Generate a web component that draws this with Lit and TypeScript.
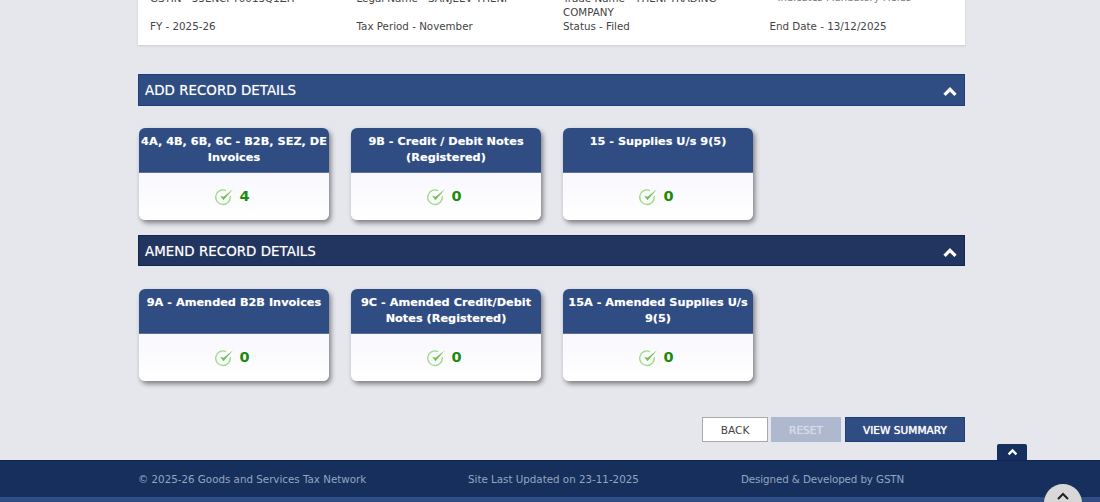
import { LitElement, html, css, svg } from "lit";
import { customElement } from "lit/decorators.js";

const check = svg`<svg class="chk" width="19" height="19" viewBox="0 0 18 18" fill="none">
  <path d="M14.4 8.6 A6.9 6.9 0 1 1 10.4 3.4" stroke="#9ddc84" stroke-width="1.3"/>
  <path d="M4.8 8.4 L8 12.6 L17 2.2 L8.1 9.2 Z" fill="#6fc24f"/>
</svg>`;

const chevron = svg`<svg class="chev" width="16" height="11" viewBox="0 0 14 10" fill="none"><path d="M2 8 L7 3 L12 8" stroke="#fff" stroke-width="3"/></svg>`;
const chevronSmall = svg`<svg width="11" height="8" viewBox="0 0 14 10" fill="none"><path d="M2 8 L7 3 L12 8" stroke="#fff" stroke-width="3"/></svg>`;

const add = [
  ["4A, 4B, 6B, 6C - B2B, SEZ, DE Invoices", "4"],
  ["9B - Credit / Debit Notes (Registered)", "0"],
  ["15 - Supplies U/s 9(5)", "0"],
];
const amend = [
  ["9A - Amended B2B Invoices", "0"],
  ["9C - Amended Credit/Debit Notes (Registered)", "0"],
  ["15A - Amended Supplies U/s 9(5)", "0"],
];

@customElement("app-root")
export class AppRoot extends LitElement {
  static styles = css`
    :host { display: block; position: relative; width: 1100px; height: 502px; overflow: hidden; background: #e6e7ed; font-family: "DejaVu Sans", Verdana, sans-serif; }
    .wrap { width: 827px; margin-left: 138px; }
    .info { margin-top: -9px; height: 54px; box-sizing: border-box; background: #fff; box-shadow: 0 1px 2px rgba(0,0,0,.12); display: grid; grid-template-columns: repeat(4, 206.5px); padding-left: 12px; font-size: 10.3px; line-height: 14px; color: #444; align-content: start; }
    .mand { color: #777; font-size: 10px; padding-left: 8px; }
    .bar { display: flex; justify-content: space-between; align-items: center; box-sizing: border-box; background: #2f4d83; border: 1px solid #1f3f7c; color: #fff; font-size: 13.45px; padding: 0 6px 0 6px; text-shadow: 0 0 1px rgba(255,255,255,.5); }
    .chev { display: block; margin-top: 2px; }
    .bar.add { margin-top: 29px; height: 32px; }
    .bar.amend { margin-top: 15px; height: 31px; padding-top: 1px; background: #223560; border-color: #14264f; }
    .cards { display: flex; gap: 22px; margin: 22px 0 0 1px; }
    .bar.amend + .cards { margin-top: 23px; }
    .card { width: 190px; height: 92px; border-radius: 6px; overflow: hidden; box-shadow: 2px 3px 5px rgba(0,0,0,.45); display: flex; flex-direction: column; background: linear-gradient(#f1f1fc, #fff); }
    .card-h { height: 45px; flex: none; box-sizing: border-box; background: #2f4d83; border-bottom: 1px solid #5a7099; color: #fff; font-size: 11.3px; font-weight: 700; line-height: 16px; text-align: center; padding: 6px 0 0; text-shadow: 0 0 1px rgba(255,255,255,.4); }
    .card-b { flex: 1; display: flex; align-items: center; justify-content: center; gap: 5px; color: #1d8a0e; font-size: 14.5px; font-weight: 700; padding: 0 3px 2px 0; }
    .chk { display: block; margin-top: 1px; }
    .actions { display: flex; justify-content: flex-end; gap: 3px; margin-top: 36px; }
    .btn { height: 25px; box-sizing: border-box; display: flex; align-items: center; justify-content: center; font-size: 10.6px; }
    .back { width: 66px; background: #fff; border: 1px solid #aaa; color: #444; }
    .reset { width: 70px; background: #aeb9cf; color: #d5dae6; margin-right: 1px; text-shadow: 0 0 1px rgba(255,255,255,.6); }
    .view { width: 120px; background: #2f4d83; border: 1px solid #1f3f7c; color: #fff; text-shadow: 0 0 1px #fff; }
    footer { position: absolute; left: 0; right: 0; top: 460px; height: 42px; box-sizing: border-box; background: #172f5d; border-top: 1px solid #0f2558; border-bottom: 5px solid #2f4d83; font-size: 10.3px; color: #93a6c0; display: grid; grid-template-columns: 330px 273px 1fr; padding-left: 138px; align-items: center; }
    .credit { letter-spacing: -0.1px; }
    .up { position: absolute; left: 997px; top: 444px; width: 30px; height: 16px; background: #172f5d; border-radius: 2px 2px 0 0; display: flex; align-items: center; justify-content: center; }
    .circle { position: absolute; left: 1044px; top: 484px; width: 38px; height: 38px; border-radius: 50%; background: #d8d8d8; display: flex; justify-content: center; padding-top: 7px; box-sizing: border-box; }
  `;

  cards(list: string[][]) {
    return html`<div class="cards">${list.map(
      ([t, n]) => html`<div class="card"><div class="card-h">${t}</div><div class="card-b">${check}<span>${n}</span></div></div>`
    )}</div>`;
  }

  render() {
    return html`
      <div class="wrap">
        <div class="info">
          <div>GSTIN - 33ENCPT0013Q1ZH</div>
          <div>Legal Name - SANJEEV THENI</div>
          <div>Trade Name - THENI TRADING COMPANY</div>
          <div class="mand">Indicates Mandatory Fields</div>
          <div>FY - 2025-26</div>
          <div>Tax Period - November</div>
          <div>Status - Filed</div>
          <div>End Date - 13/12/2025</div>
        </div>
        <div class="bar add"><span>ADD RECORD DETAILS</span>${chevron}</div>
        ${this.cards(add)}
        <div class="bar amend"><span>AMEND RECORD DETAILS</span>${chevron}</div>
        ${this.cards(amend)}
        <div class="actions">
          <div class="btn back">BACK</div>
          <div class="btn reset">RESET</div>
          <div class="btn view">VIEW SUMMARY</div>
        </div>
      </div>
      <footer>
        <span>© 2025-26 Goods and Services Tax Network</span>
        <span>Site Last Updated on 23-11-2025</span>
        <span class="credit">Designed &amp; Developed by GSTN</span>
      </footer>
      <div class="up">${chevronSmall}</div>
      <div class="circle"><svg width="14" height="10" viewBox="0 0 14 10" fill="none"><path d="M2 8 L7 3 L12 8" stroke="#222" stroke-width="2"/></svg></div>
    `;
  }
}
